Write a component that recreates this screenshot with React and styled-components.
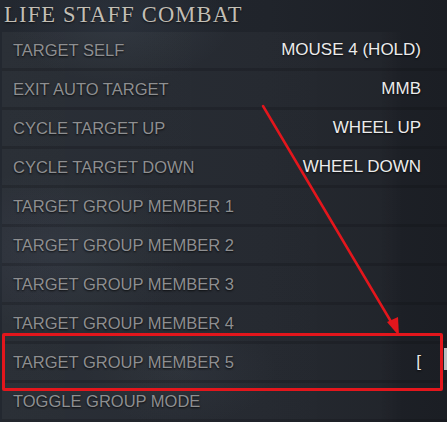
import React from "react";
import styled, { createGlobalStyle } from "styled-components";

const GlobalStyle = createGlobalStyle`
  html, body {
    margin: 0;
    padding: 0;
    background: #1d2128;
  }
`;

const Panel = styled.div`
  position: relative;
  width: 447px;
  height: 422px;
  overflow: hidden;
  background:
    radial-gradient(ellipse 180px 120px at 60px 250px, rgba(120, 140, 165, 0.10), transparent 70%),
    radial-gradient(ellipse 160px 90px at 120px 20px, rgba(110, 130, 155, 0.12), transparent 70%),
    radial-gradient(ellipse 140px 80px at 180px 370px, rgba(110, 125, 145, 0.08), transparent 70%),
    linear-gradient(90deg, #232830 0%, #20242b 60%, #1b1e24 100%);
  font-family: "Liberation Sans", Arial, sans-serif;
`;

const Title = styled.h2`
  margin: 0;
  height: 32px;
  padding: 0 0 2px 4px;
  box-sizing: border-box;
  display: flex;
  align-items: center;
  font-family: "Liberation Serif", "Times New Roman", serif;
  font-weight: normal;
  font-size: 22.5px;
  letter-spacing: 1.2px;
  color: #c2beb5;
  text-shadow: 0 1px 2px rgba(0, 0, 0, 0.7);
`;

const List = styled.div`
  display: flex;
  flex-direction: column;
`;

const Row = styled.div`
  height: 39px;
  box-sizing: border-box;
  display: flex;
  align-items: center;
  justify-content: space-between;
  padding: 0 26px 0 11px;
  border-bottom: 3px solid rgba(12, 14, 18, 0.22);
  background: linear-gradient(
    90deg,
    rgba(255, 255, 255, 0.035) 0%,
    rgba(255, 255, 255, 0.025) 85%,
    rgba(255, 255, 255, 0) 90%
  );
  margin-left: 2px;
`;

const Label = styled.span`
  font-size: 16.5px;
  color: #8e8f91;
  text-shadow: 0 1px 2px rgba(0, 0, 0, 0.8);
`;

const Binding = styled.span`
  font-size: 17px;
  color: #ebebeb;
  text-shadow: 0 1px 2px rgba(0, 0, 0, 0.8);
`;

const Highlight = styled.div`
  position: absolute;
  left: 2px;
  top: 333px;
  width: 441px;
  height: 58px;
  box-sizing: border-box;
  border: 3px solid #e3161c;
  border-radius: 2px;
  pointer-events: none;
`;

const Arrow = styled.svg`
  position: absolute;
  left: 0;
  top: 0;
  pointer-events: none;
`;

const ScrollThumb = styled.div`
  position: absolute;
  right: 0;
  top: 348px;
  width: 3px;
  height: 22px;
  background: #b9bbbe;
`;

const bindings = [
  ["TARGET SELF", "MOUSE 4 (HOLD)"],
  ["EXIT AUTO TARGET", "MMB"],
  ["CYCLE TARGET UP", "WHEEL UP"],
  ["CYCLE TARGET DOWN", "WHEEL DOWN"],
  ["TARGET GROUP MEMBER 1", ""],
  ["TARGET GROUP MEMBER 2", ""],
  ["TARGET GROUP MEMBER 3", ""],
  ["TARGET GROUP MEMBER 4", ""],
  ["TARGET GROUP MEMBER 5", "["],
  ["TOGGLE GROUP MODE", ""],
];

export default function App() {
  return (
    <>
      <GlobalStyle />
      <Panel>
        <Title>LIFE STAFF COMBAT</Title>
        <List>
          {bindings.map(([name, key]) => (
            <Row key={name}>
              <Label>{name}</Label>
              <Binding>{key}</Binding>
            </Row>
          ))}
        </List>
        <Highlight />
        <ScrollThumb />
        <Arrow width="447" height="422" viewBox="0 0 447 422">
          <line x1="263" y1="106" x2="393" y2="325" stroke="#e3161c" strokeWidth="2.5" strokeLinecap="round" />
          <polygon points="399,336 387,322 398,317" fill="#e3161c" />
        </Arrow>
      </Panel>
    </>
  );
}
